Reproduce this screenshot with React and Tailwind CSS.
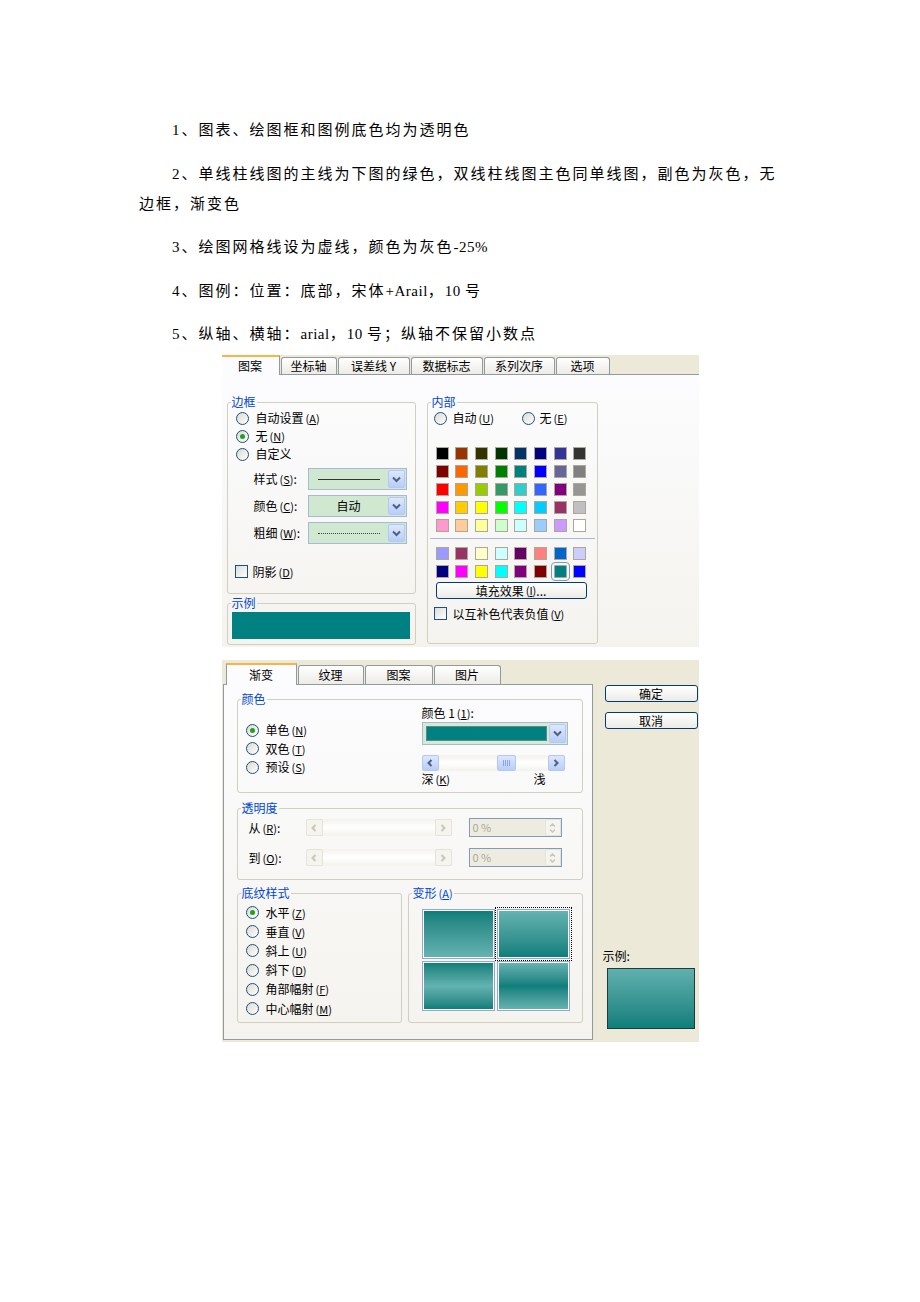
import React from "react";

const PALETTE = [
  ["#000000", "#993300", "#333300", "#003300", "#003366", "#000080", "#333399", "#333333"],
  ["#800000", "#FF6600", "#808000", "#008000", "#008080", "#0000FF", "#666699", "#808080"],
  ["#FF0000", "#FF9900", "#99CC00", "#339966", "#33CCCC", "#3366FF", "#800080", "#969696"],
  ["#FF00FF", "#FFCC00", "#FFFF00", "#00FF00", "#00FFFF", "#00CCFF", "#993366", "#C0C0C0"],
  ["#FF99CC", "#FFCC99", "#FFFF99", "#CCFFCC", "#CCFFFF", "#99CCFF", "#CC99FF", "#FFFFFF"],
];

const EXTRA = [
  ["#9999FF", "#993366", "#FFFFCC", "#CCFFFF", "#660066", "#FF8080", "#0066CC", "#CCCCFF"],
  ["#000080", "#FF00FF", "#FFFF00", "#00FFFF", "#800080", "#800000", "#008080", "#0000FF"],
];

function Acc({ k }) {
  return (
    <span className="ml-[2px] text-[11px]">
      (<span className="underline">{k}</span>)
    </span>
  );
}

function Radio({ checked }) {
  return (
    <span className="flex size-[13px] shrink-0 items-center justify-center rounded-full border border-[#1c5180] bg-linear-to-br from-[#dcd9cf] to-white">
      {checked && <span className="size-[5px] rounded-full bg-[#21a121]" />}
    </span>
  );
}

function Check() {
  return <span className="size-[13px] shrink-0 border border-[#1c5180] bg-linear-to-br from-[#dcdcd7] to-white" />;
}

function RadioRow({ label, k, checked, h = "h-[18px]" }) {
  return (
    <div className={`flex items-center ${h}`}>
      <Radio checked={checked} />
      <span className="ml-[7px] leading-none">
        {label}
        {k && <Acc k={k} />}
      </span>
    </div>
  );
}

function Group({ title, className = "", children }) {
  return (
    <fieldset className={`rounded-[3px] border border-[#d0d0bf] ${className}`}>
      <legend className="ml-[3px] px-[1px] text-[12px] leading-[14px] text-[#0046d5]">{title}</legend>
      {children}
    </fieldset>
  );
}

function ChevronDown() {
  return (
    <svg width="9" height="7" viewBox="0 0 9 7">
      <path d="M1 1.5l3.5 3.5 3.5-3.5" fill="none" stroke="#4d6185" strokeWidth="2" />
    </svg>
  );
}

function ArrowBtn({ dir, disabled }) {
  const c = disabled ? "#c9c7ba" : "#4d6185";
  return (
    <div
      className={`flex w-[17px] items-center justify-center rounded-[2px] border ${
        disabled ? "border-[#e6e4da] bg-[#f5f4ef]" : "border-[#b4c8f6] bg-linear-to-b from-[#dde7fe] to-[#b9cdf9]"
      }`}
    >
      <svg width="6" height="8" viewBox="0 0 6 8">
        <path d={dir === "left" ? "M4.5 1L1.5 4l3 3" : "M1.5 1l3 3-3 3"} fill="none" stroke={c} strokeWidth="2" />
      </svg>
    </div>
  );
}

function ComboArrow() {
  return (
    <div className="flex w-[17px] items-center justify-center rounded-[2px] border border-[#b4c8f6] bg-linear-to-b from-[#dde7fe] to-[#b9cdf9]">
      <ChevronDown />
    </div>
  );
}

function Drop({ children }) {
  return (
    <div className="flex h-[22px] w-[99px] border border-[#a5bad6] bg-[#cfe8cf] p-[1px]">
      <div className="flex flex-1 items-center justify-center">{children}</div>
      <ComboArrow />
    </div>
  );
}

function SpinBox() {
  return (
    <div className="flex h-[19px] w-[93px] border border-[#7f9db9] bg-[#eeebe1]">
      <span className="flex-1 pl-[3px] text-[11px] leading-[17px] text-[#aca899]">0 %</span>
      <div className="flex w-[16px] flex-col items-center justify-center gap-[2px] rounded-[2px] border border-[#e6e4da] bg-[#f5f4ef]">
        <svg width="7" height="4" viewBox="0 0 7 4">
          <path d="M1 3.5l2.5-2.5 2.5 2.5" fill="none" stroke="#c9c7ba" strokeWidth="1.5" />
        </svg>
        <svg width="7" height="4" viewBox="0 0 7 4">
          <path d="M1 .5l2.5 2.5 2.5-2.5" fill="none" stroke="#c9c7ba" strokeWidth="1.5" />
        </svg>
      </div>
    </div>
  );
}

function DisabledScroll() {
  return (
    <div className="flex h-[17px] w-[146px] bg-linear-to-b from-[#f3f2ec] via-white to-[#f3f2ec]">
      <ArrowBtn dir="left" disabled />
      <div className="flex-1" />
      <ArrowBtn dir="right" disabled />
    </div>
  );
}

function Swatch({ c, selected }) {
  return (
    <span
      className={`size-[13px] border border-[#aca899] ${selected ? "rounded-[1px] outline outline-1 outline-offset-2 outline-[#7b9ebd]" : ""}`}
      style={{ background: c }}
    />
  );
}

function SwatchGrid({ rows, selected }) {
  return (
    <div className="grid grid-cols-[repeat(8,13px)] gap-x-[6.7px] gap-y-[5px]">
      {rows.flatMap((row, r) =>
        row.map((c, i) => <Swatch key={`${r}-${i}`} c={c} selected={selected && r === 1 && i === 6} />)
      )}
    </div>
  );
}

function PatternDialog() {
  const tabs = [
    ["坐标轴", "w-[56px]"],
    ["误差线 Y", "w-[72px]"],
    ["数据标志", "w-[72px]"],
    ["系列次序", "w-[71px]"],
    ["选项", "w-[54px]"],
  ];
  return (
    <div className="mx-auto flex h-[292px] w-[477px] flex-col bg-[#ece9d8] text-[12px] text-black">
      <div className="flex h-[20px] items-end gap-[1px] border-b border-[#919b9c]">
        <div className="relative -mb-px flex h-[20px] w-[58px] items-center justify-center border-r border-t-[2px] border-r-[#919b9c] border-t-[#f5b548] bg-[#fcfcfe]">
          图案
        </div>
        {tabs.map(([t, w]) => (
          <div
            key={t}
            className={`flex h-[17px] ${w} items-center justify-center rounded-t-[3px] border border-b-0 border-[#919b9c] bg-linear-to-b from-white to-[#ecebe6]`}
          >
            {t}
          </div>
        ))}
      </div>
      <div className="flex flex-1 gap-[11px] bg-linear-to-b from-[#fcfcfe] to-[#f4f3ee] pl-[5px] pt-[20px]">
        <div className="flex flex-col gap-[2px]">
          <Group title="边框" className="h-[199px] w-[189px]">
            <div className="pl-[8px]">
              <RadioRow label="自动设置" k="A" />
              <RadioRow label="无" k="N" checked />
              <RadioRow label="自定义" />
            </div>
            <div className="mt-[5px] flex flex-col gap-[5px] pl-[26px]">
              <div className="flex h-[22px] items-center">
                <span className="w-[54px]">
                  样式<Acc k="S" />:
                </span>
                <Drop>
                  <span className="h-px w-[62px] bg-[#333]" />
                </Drop>
              </div>
              <div className="flex h-[22px] items-center">
                <span className="w-[54px]">
                  颜色<Acc k="C" />:
                </span>
                <Drop>自动</Drop>
              </div>
              <div className="flex h-[22px] items-center">
                <span className="w-[54px]">
                  粗细<Acc k="W" />:
                </span>
                <Drop>
                  <span className="w-[62px] border-t border-dotted border-[#444]" />
                </Drop>
              </div>
            </div>
            <div className="mt-[21px] flex h-[13px] items-center pl-[7px]">
              <Check />
              <span className="ml-[5px]">
                阴影<Acc k="D" />
              </span>
            </div>
          </Group>
          <Group title="示例" className="h-[49px] w-[189px]">
            <div className="ml-[4px] mt-[2px] h-[27px] w-[178px] bg-[#008080]" />
          </Group>
        </div>
        <Group title="内部" className="h-[249px] w-[171px]">
          <div className="flex h-[18px] items-center pl-[6px]">
            <div className="flex w-[88px] items-center">
              <Radio />
              <span className="ml-[6px]">
                自动<Acc k="U" />
              </span>
            </div>
            <Radio />
            <span className="ml-[5px]">
              无<Acc k="E" />
            </span>
          </div>
          <div className="mt-[20px] pl-[8px]">
            <SwatchGrid rows={PALETTE} />
          </div>
          <div className="mx-[2px] mt-[6px] h-px bg-[#a3b8db]" />
          <div className="mt-[8px] pl-[8px]">
            <SwatchGrid rows={EXTRA} selected />
          </div>
          <div className="ml-[8px] mt-[4px] flex h-[17px] w-[151px] items-center justify-center rounded-[3px] border border-[#003c74] bg-linear-to-b from-white to-[#ecebe6]">
            填充效果<Acc k="I" />...
          </div>
          <div className="mt-[8px] flex h-[13px] items-center pl-[6px]">
            <Check />
            <span className="ml-[6px]">
              以互补色代表负值<Acc k="V" />
            </span>
          </div>
        </Group>
      </div>
    </div>
  );
}

function GradCell({ grad, focus }) {
  return (
    <div className={`h-[50px] w-[73px] ${focus ? "outline outline-1 outline-dotted outline-offset-[1px] outline-black" : ""}`}>
      <div className="h-full w-full border border-[#95a9c3] bg-white p-[1px]">
        <div className={`h-full w-full ${grad}`} />
      </div>
    </div>
  );
}

function GradientDialog() {
  const tabs = [
    ["纹理", "w-[66px]"],
    ["图案", "w-[68px]"],
    ["图片", "w-[67px]"],
  ];
  return (
    <div className="mx-auto mt-[13px] flex h-[382px] w-[477px] bg-[#ece9d8] text-[12px] text-black">
      <div className="ml-[1px] flex w-[370px] flex-col">
        <div className="flex h-[25px] items-end gap-[1px] border-b border-[#919b9c] pl-[3px]">
          <div className="relative -mb-px flex h-[22px] w-[71px] items-center justify-center border-x border-t-[2px] border-x-[#919b9c] border-t-[#f5b548] bg-[#fcfcfe]">
            渐变
          </div>
          {tabs.map(([t, w]) => (
            <div
              key={t}
              className={`flex h-[19px] ${w} items-center justify-center rounded-t-[3px] border border-b-0 border-[#919b9c] bg-linear-to-b from-white to-[#ecebe6]`}
            >
              {t}
            </div>
          ))}
        </div>
        <div className="h-[355px] border-x border-b border-[#919b9c] bg-linear-to-b from-[#fcfcfe] to-[#f4f3ee] pl-[13px] pt-[7px]">
          <Group title="颜色" className="h-[101px] w-[346px]">
            <div className="flex">
              <div className="w-[184px] pl-[8px] pt-[15px]">
                <RadioRow label="单色" k="N" checked h="h-[18.5px]" />
                <RadioRow label="双色" k="T" h="h-[18.5px]" />
                <RadioRow label="预设" k="S" h="h-[18.5px]" />
              </div>
              <div className="w-[146px]">
                <div className="h-[14px] leading-[14px]">
                  颜色 1<Acc k="1" />:
                </div>
                <div className="mt-[2px] flex h-[23px] border border-[#a5bad6] bg-[#d3ead3] p-[1px]">
                  <div className="flex-1 p-[2px]">
                    <div className="h-full w-full border border-[#5d8a88] bg-[#008080]" />
                  </div>
                  <ComboArrow />
                </div>
                <div className="mt-[10px] flex h-[16px] w-[143px] bg-linear-to-b from-[#f3f2ec] via-white to-[#f3f2ec]">
                  <ArrowBtn dir="left" />
                  <div className="flex flex-1">
                    <div className="ml-[58px] flex w-[19px] items-center justify-center gap-[1px] rounded-[2px] border border-[#b4c8f6] bg-linear-to-b from-[#dde7fe] to-[#b9cdf9]">
                      <span className="h-[6px] w-px bg-[#8ca4e6]" />
                      <span className="h-[6px] w-px bg-[#8ca4e6]" />
                      <span className="h-[6px] w-px bg-[#8ca4e6]" />
                      <span className="h-[6px] w-px bg-[#8ca4e6]" />
                    </div>
                  </div>
                  <ArrowBtn dir="right" />
                </div>
                <div className="mt-[1px] flex h-[14px] w-[124px] items-center justify-between leading-none">
                  <span>
                    深<Acc k="K" />
                  </span>
                  <span>浅</span>
                </div>
              </div>
            </div>
          </Group>
          <Group title="透明度" className="mt-[8px] h-[79px] w-[346px]">
            <div className="flex flex-col gap-[11px] pl-[11px] pt-[3px]">
              {[
                ["从", "R"],
                ["到", "O"],
              ].map(([l, k]) => (
                <div key={l} className="flex h-[19px] items-center">
                  <span className="w-[57px]">
                    {l}
                    <Acc k={k} />:
                  </span>
                  <DisabledScroll />
                  <div className="ml-[17px]">
                    <SpinBox />
                  </div>
                </div>
              ))}
            </div>
          </Group>
          <div className="mt-[6px] flex gap-[6px]">
            <Group title="底纹样式" className="h-[137px] w-[165px]">
              <div className="pl-[8px] pt-[3px]">
                <RadioRow label="水平" k="Z" checked h="h-[19.2px]" />
                <RadioRow label="垂直" k="V" h="h-[19.2px]" />
                <RadioRow label="斜上" k="U" h="h-[19.2px]" />
                <RadioRow label="斜下" k="D" h="h-[19.2px]" />
                <RadioRow label="角部幅射" k="F" h="h-[19.2px]" />
                <RadioRow label="中心幅射" k="M" h="h-[19.2px]" />
              </div>
            </Group>
            <Group
              title={
                <>
                  变形<Acc k="A" />
                </>
              }
              className="h-[137px] w-[175px]"
            >
              <div className="grid grid-cols-[73px_73px] gap-[2px] pl-[13px] pt-[9px]">
                <GradCell grad="bg-linear-to-b from-[#0b7f7c] to-[#63b3b1]" />
                <GradCell grad="bg-linear-to-b from-[#63b3b1] to-[#0b7f7c]" focus />
                <GradCell grad="bg-linear-to-b from-[#0b7f7c] via-[#63b3b1] to-[#0b7f7c]" />
                <GradCell grad="bg-linear-to-b from-[#63b3b1] via-[#0b7f7c] to-[#63b3b1]" />
              </div>
            </Group>
          </div>
        </div>
      </div>
      <div className="flex flex-1 flex-col pb-[13px] pl-[12px] pt-[25px]">
        <div className="flex h-[17px] w-[93px] items-center justify-center rounded-[3px] border border-[#003c74] bg-linear-to-b from-white to-[#ecebe6]">
          确定
        </div>
        <div className="mt-[10px] flex h-[17px] w-[93px] items-center justify-center rounded-[3px] border border-[#003c74] bg-linear-to-b from-white to-[#ecebe6]">
          取消
        </div>
        <div className="mt-auto -ml-[2px] h-[14px] leading-[14px]">示例:</div>
        <div className="ml-[2px] mt-[5px] h-[61px] w-[88px] border border-[#1e3b3a] bg-linear-to-b from-[#5fb0ae] to-[#0b7f7c]" />
      </div>
    </div>
  );
}

function Latin({ children }) {
  return <span className="tracking-[0.5px]">{children}</span>;
}

export default function App() {
  return (
    <div className="min-h-[1302px] w-full bg-white font-['Noto_Sans_CJK_SC',sans-serif]">
      <div className="pl-[139px] pt-[115px] font-['Liberation_Serif','Noto_Sans_CJK_SC',serif] text-[15px] leading-[30px] tracking-[2px] text-black">
        <p className="mb-[13.5px] indent-[33px]">1、图表、绘图框和图例底色均为透明色</p>
        <p className="mb-[13.5px] indent-[33px]">
          2、单线柱线图的主线为下图的绿色，双线柱线图主色同单线图，副色为灰色，无
          <br />
          边框，渐变色
        </p>
        <p className="mb-[13.5px] indent-[33px]">
          3、绘图网格线设为虚线，颜色为灰色<Latin>-25%</Latin>
        </p>
        <p className="mb-[13.5px] indent-[33px]">
          4、图例：位置：底部，宋体<Latin>+Arail</Latin>，<Latin>10 </Latin>号
        </p>
        <p className="indent-[33px]">
          5、纵轴、横轴：<Latin>arial</Latin>，<Latin>10 </Latin>号；纵轴不保留小数点
        </p>
      </div>
      <div className="mt-[6px]">
        <PatternDialog />
        <GradientDialog />
      </div>
    </div>
  );
}
